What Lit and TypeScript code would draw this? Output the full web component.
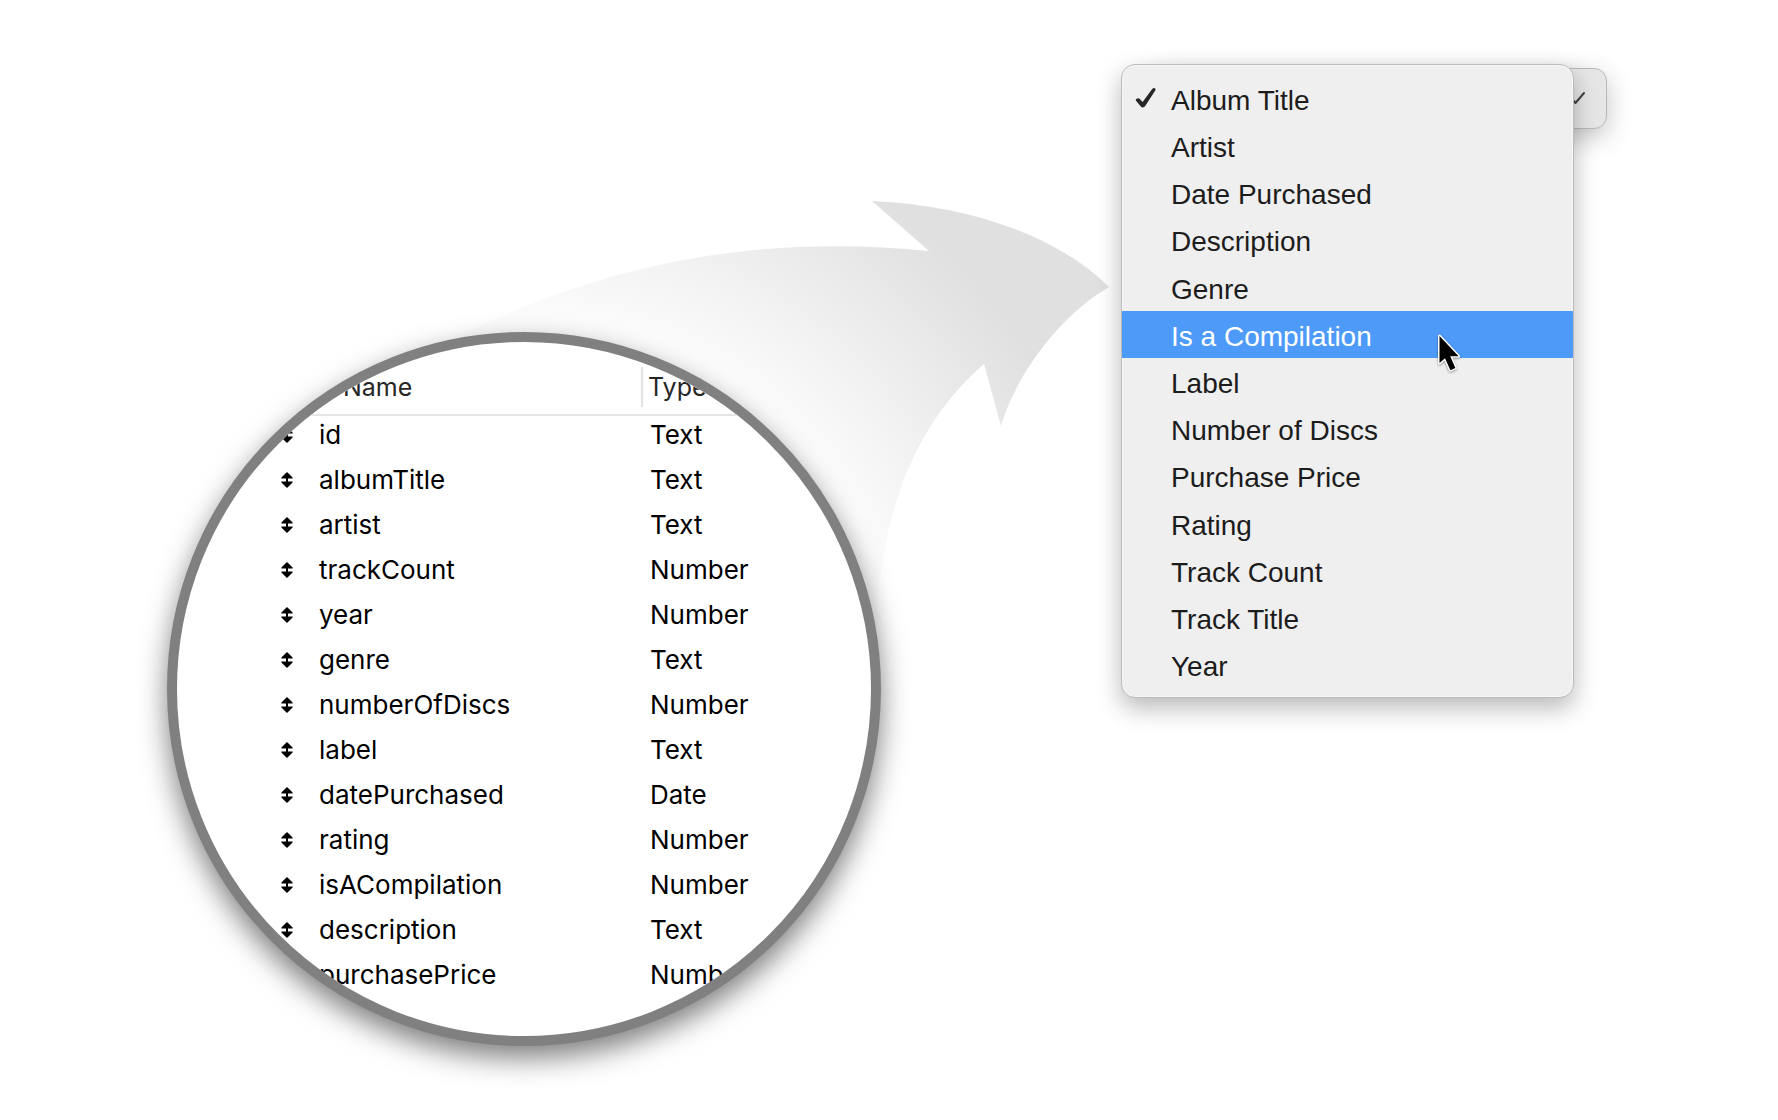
import { LitElement, html, css, svg, nothing } from "lit";
import { customElement, property, state } from "lit/decorators.js";

interface Field {
  name: string;
  type: string;
}

const FIELDS: Field[] = [
  { name: "id", type: "Text" },
  { name: "albumTitle", type: "Text" },
  { name: "artist", type: "Text" },
  { name: "trackCount", type: "Number" },
  { name: "year", type: "Number" },
  { name: "genre", type: "Text" },
  { name: "numberOfDiscs", type: "Number" },
  { name: "label", type: "Text" },
  { name: "datePurchased", type: "Date" },
  { name: "rating", type: "Number" },
  { name: "isACompilation", type: "Number" },
  { name: "description", type: "Text" },
  { name: "purchasePrice", type: "Number" },
];

const OPTIONS = [
  "Album Title",
  "Artist",
  "Date Purchased",
  "Description",
  "Genre",
  "Is a Compilation",
  "Label",
  "Number of Discs",
  "Purchase Price",
  "Rating",
  "Track Count",
  "Track Title",
  "Year",
];

/** Round magnifier that shows part of the field table. */
@customElement("field-lens")
export class FieldLens extends LitElement {
  @property({ attribute: false }) fields: Field[] = [];

  static styles = css`
    :host {
      display: block;
      box-sizing: border-box;
      aspect-ratio: 1;
      overflow: hidden;
      border: 10px solid #808080;
      border-radius: 50%;
      background: #fff;
      box-shadow: 0 12px 28px rgba(0, 0, 0, 0.5);
      font-family: Inter, "Liberation Sans", sans-serif;
      font-size: 26px;
      color: #000;
    }
    .fields {
      width: 100%;
      table-layout: fixed;
      border-collapse: collapse;
    }
    .grip-col {
      width: 142px;
    }
    .name-col {
      width: 322px;
    }
    .head {
      padding: 25px 0 7px;
      border-bottom: 2px solid #e6e6e6;
      font-size: 25px;
      font-weight: 400;
      line-height: 40px;
      text-align: left;
      color: #262626;
    }
    .head-label {
      display: block;
      padding-left: 24px;
    }
    .head-label.divided {
      border-left: 2px solid #e2e2e2;
      padding-left: 5px;
    }
    .cell {
      padding: 1px 0 8px;
      line-height: 36px;
    }
    .cell.type {
      padding-left: 9px;
    }
    .grip {
      display: block;
      width: 12px;
      height: 16px;
      margin-left: 104px;
    }
  `;

  render() {
    return html`
      <table class="fields">
        <colgroup>
          <col class="grip-col" />
          <col class="name-col" />
          <col />
        </colgroup>
        <thead>
          <tr>
            <td class="head"></td>
            <th class="head" scope="col"><span class="head-label">Name</span></th>
            <th class="head" scope="col"><span class="head-label divided">Type</span></th>
          </tr>
        </thead>
        <tbody>
          ${this.fields.map(
            (f) => html`
              <tr>
                <td class="cell">
                  <svg class="grip" viewBox="0 0 12 16" aria-hidden="true">
                    <path d="M6 0 11.6 5.6V6.6H7V9.4H11.6V10.4L6 16 .4 10.4V9.4H5V6.6H.4V5.6Z" />
                  </svg>
                </td>
                <td class="cell">${f.name}</td>
                <td class="cell type">${f.type}</td>
              </tr>
            `
          )}
        </tbody>
      </table>
    `;
  }
}

/** Pop-up button with its menu opened over it. */
@customElement("field-popup")
export class FieldPopup extends LitElement {
  @property({ attribute: false }) options: string[] = [];
  @property() selected = "";
  @property() active = "";

  static styles = css`
    :host {
      display: block;
      position: relative;
      font-family: "Liberation Sans", Arial, sans-serif;
      font-size: 28px;
    }
    .trigger {
      position: absolute;
      top: 4px;
      right: -33px;
      display: flex;
      align-items: center;
      justify-content: flex-end;
      width: 100%;
      height: 61px;
      padding: 0 20px 2px;
      border: 1px solid #b9b9b9;
      border-radius: 13px;
      background: #e6e6e6;
      box-shadow: 0 8px 26px rgba(0, 0, 0, 0.24);
    }
    .chevron {
      width: 20px;
      height: 14px;
      fill: none;
      stroke: #444;
      stroke-width: 2;
      stroke-linecap: round;
      stroke-linejoin: round;
    }
    .menu {
      position: relative;
      box-sizing: border-box;
      display: grid;
      grid-auto-rows: 1fr;
      min-height: 634px;
      margin: 0;
      padding: 10px 0 8px;
      border: 1px solid #bcbcbc;
      border-radius: 14px;
      background: #efefef;
      box-shadow:
        inset 0 0 0 1px #f6f6f6,
        0 10px 24px rgba(0, 0, 0, 0.28);
      list-style: none;
    }
    .item {
      position: relative;
      display: flex;
    }
    .option {
      display: flex;
      flex: 1;
      align-items: center;
      gap: 14px;
      margin: 0;
      padding: 4px 14px 0 13px;
      border: 0;
      background: none;
      font: inherit;
      line-height: 32px;
      text-align: left;
      color: #1c1c1c;
    }
    .option.active {
      background: #4d9af9;
      color: #fff;
    }
    .mark {
      flex: none;
      width: 22px;
      height: 22px;
      margin-bottom: 6px;
      fill: #262626;
    }
    .pointer {
      position: absolute;
      top: 22px;
      left: 70%;
      z-index: 1;
      width: 24px;
      height: 40px;
      filter: drop-shadow(0 1px 1px rgba(0, 0, 0, 0.4));
    }
  `;

  render() {
    return html`
      <button class="trigger" type="button" aria-label="Field" aria-haspopup="menu" aria-expanded="true">
        <svg class="chevron" viewBox="0 0 20 14" aria-hidden="true"><path d="M1 2 9.5 12 18 2" /></svg>
      </button>
      <ul class="menu" role="menu">
        ${this.options.map(
          (o) => html`
            <li class="item" role="none">
              <button
                class="option ${o === this.active ? "active" : ""}"
                type="button"
                role="menuitemradio"
                aria-checked=${o === this.selected ? "true" : "false"}
                @click=${() => (this.selected = o)}
              >
                <svg class="mark" viewBox="0 0 22 22" aria-hidden="true">
                  ${o === this.selected
                    ? svg`<path d="M.8 13.4C.4 11.6 3.2 10.4 4.6 11.8L7.6 15 17.2 2C18.6.2 21.2 1.2 20.4 3.2L10.2 19C9 20.8 6.8 20.9 5.6 19.2Z" />`
                    : nothing}
                </svg>
                <span>${o}</span>
              </button>
              ${o === this.active
                ? html`<svg class="pointer" viewBox="0 0 24 40" aria-hidden="true">
                    <path
                      d="M1.5 3V30L7 25.2 12.4 37.2 17.4 35 12.2 23.2H20.6Z"
                      stroke="#fff"
                      stroke-width="3"
                      stroke-linejoin="round"
                      paint-order="stroke"
                    />
                  </svg>`
                : nothing}
            </li>
          `
        )}
      </ul>
    `;
  }
}

@customElement("app-root")
export class AppRoot extends LitElement {
  @state() private selected = "Album Title";
  @state() private active = "Is a Compilation";

  static styles = css`
    :host {
      display: block;
      min-height: 100vh;
      background: #fff;
    }
    .stage {
      box-sizing: border-box;
      display: grid;
      grid-template-columns: 714px minmax(120px, 1fr) 453px;
      align-items: start;
      padding: 0 204px 74px 167px;
    }
    .arrow {
      grid-area: 1 / 1 / 2 / 3;
      width: 100%;
      height: 720px;
    }
    .lens {
      grid-area: 1 / 1 / 2 / 2;
      margin-top: 332px;
    }
    .popup {
      grid-area: 1 / 3 / 2 / 4;
      margin-top: 64px;
    }
  `;

  render() {
    return html`
      <main class="stage">
        <svg class="arrow" viewBox="0 0 954 720" preserveAspectRatio="none" aria-hidden="true">
          <defs>
            <radialGradient id="fade" gradientUnits="userSpaceOnUse" cx="357" cy="689" r="605">
              <stop offset=".58" stop-color="#fefefe" />
              <stop offset="1" stop-color="#e0e0e0" />
            </radialGradient>
          </defs>
          <path
            fill="url(#fade)"
            d="M285 340C420 270 580 232 762 251L705 201C800 205 890 235 942 287C895 314 850 372 834 426L817 364C740 430 712 530 709 630L600 700Z"
          />
        </svg>
        <field-lens class="lens" .fields=${FIELDS}></field-lens>
        <field-popup class="popup" .options=${OPTIONS} .selected=${this.selected} .active=${this.active}></field-popup>
      </main>
    `;
  }
}
